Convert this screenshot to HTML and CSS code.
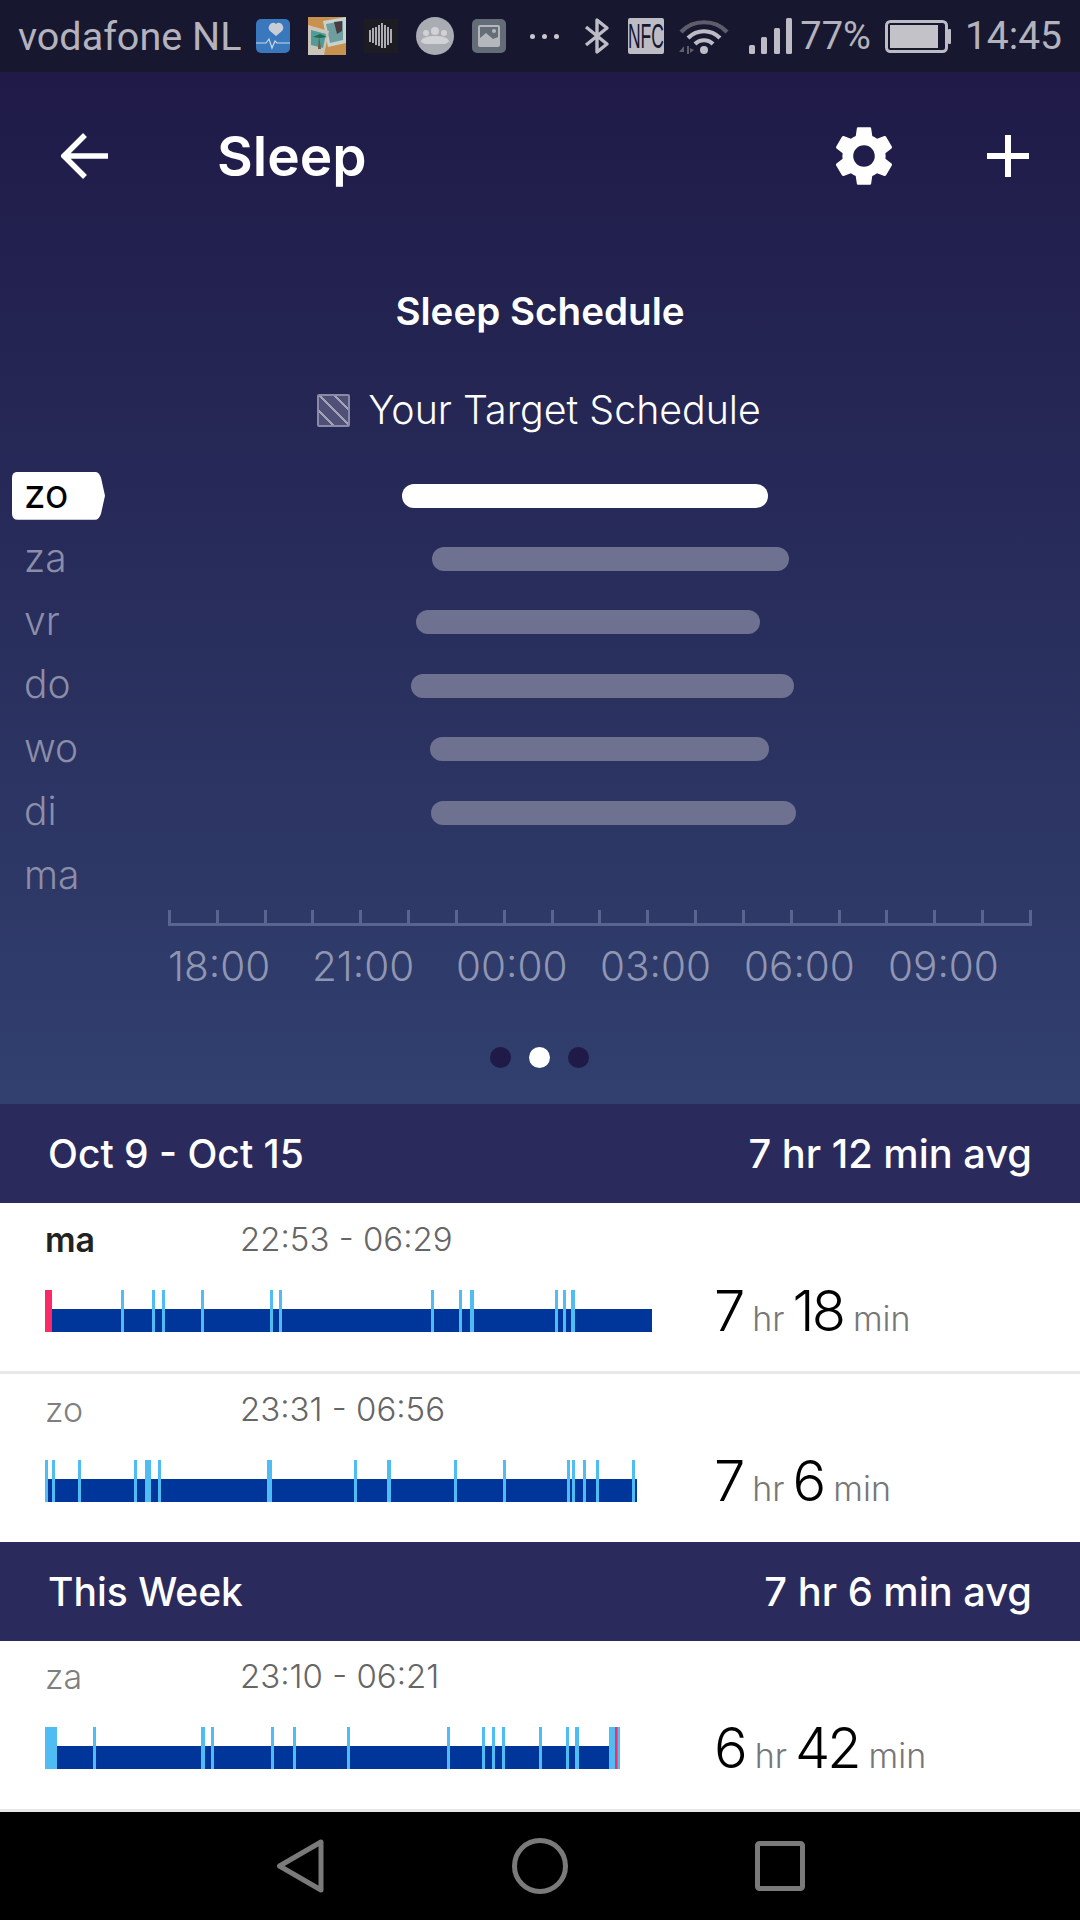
FILE: index.html
```html
<!DOCTYPE html>
<html lang="nl">
<head>
  <meta charset="UTF-8" />
  <meta name="viewport" content="width=device-width, initial-scale=1.0" />
  <title>Sleep</title>
  <link rel="stylesheet" href="styles.css">
</head>
<body>
  <div class="phone">

    <!-- android status bar -->
    <div class="statusbar">
      <span class="carrier">vodafone NL</span>
      <div class="notif-icons">
        <svg class="app-icon" viewBox="0 0 34 34">
          <rect width="34" height="34" rx="5" fill="#3a78bd"/>
          <path d="M23 20l-6 5-6-5c-4-4 2-11 6-7 4-4 10 3 6 7z" transform="translate(3 -8)" fill="#c9ced6"/>
          <path d="M0 24h10l3-4 3 9 3-7 2 2h13" fill="none" stroke="#c9d6e6" stroke-width="1.2"/>
        </svg>
        <svg class="app-icon-big" viewBox="0 0 38 38">
          <rect width="38" height="38" fill="#c9914f"/>
          <path d="M15 4l23-4v26l-18 4z" fill="#c7d3cf"/>
          <path d="M18 7l17-3v19l-13 3z" fill="#6f9ea0"/>
          <path d="M26 5l8-1v10l-5 3z" fill="#4c3a42"/>
          <path d="M0 8l21 6-5 24H0z" fill="#c9c5b9"/>
          <path d="M3 13l15 4-3 14-12-3z" fill="#4f9c9c"/>
          <path d="M11 18l2 14h-3z" fill="#7b5a3a"/>
          <path d="M5 20l7-3 7 3-7 1z" fill="#1f6a4a"/>
        </svg>
        <svg class="app-icon" viewBox="0 0 34 34">
          <rect width="34" height="34" fill="#1c1c22"/>
          <path d="M6 11v12M9 9v15M12 8v18M15 6v21M18 4v25M21 6v23M24 8v18M27 10v14" stroke="#d2d2d6" stroke-width="1.6"/>
        </svg>
        <svg class="app-icon-big" viewBox="0 0 38 38">
          <circle cx="19" cy="19" r="19" fill="#a9acb3"/>
          <circle cx="19" cy="14" r="4" fill="#d0d2d6"/>
          <circle cx="10" cy="16" r="3" fill="#d0d2d6"/>
          <circle cx="28" cy="16" r="3" fill="#d0d2d6"/>
          <path d="M5 25c0-5 8-6 14-6s14 1 14 6l-4 2H9z" fill="#d0d2d6"/>
        </svg>
        <svg class="app-icon" viewBox="0 0 34 34">
          <rect width="34" height="34" rx="5" fill="#646c77"/>
          <rect x="7" y="7" width="20" height="20" rx="1" fill="none" stroke="#b4b7bc" stroke-width="2"/>
          <path d="M8 26v-7l6-5 7 6 5-2v8z" fill="#b4b7bc"/>
          <circle cx="22" cy="12" r="2" fill="#b4b7bc"/>
        </svg>
        <div class="more-dots"><i></i><i></i><i></i></div>
      </div>
      <div class="sys-icons">
        <svg class="ic-bt" viewBox="0 0 27 38">
          <path d="M2 10l21 17-10 8V3l10 8L2 28" fill="none" stroke="#bdbcc4" stroke-width="3.4" stroke-linejoin="round"/>
        </svg>
        <span class="nfc"><span>NFC</span></span>
        <svg class="ic-wifi" viewBox="0 0 50 36">
          <path d="M2 14C14 1 36 1 48 14" fill="none" stroke="#5d5d6c" stroke-width="4.2"/>
          <path d="M9 20C18 11 32 11 41 20" fill="none" stroke="#bdbcc4" stroke-width="4.2"/>
          <path d="M16 26C21 21 29 21 34 26" fill="none" stroke="#bdbcc4" stroke-width="4.2"/>
          <circle cx="25" cy="32" r="4" fill="#bdbcc4"/>
          <path d="M0 34l5-6v6zM8 28h2v8H8zM11 30l4 2-4 3z" fill="#5d5d6c"/>
        </svg>
        <svg class="ic-signal" viewBox="0 0 43 36">
          <rect x="0" y="27" width="6" height="9" rx="1.5" fill="#bdbcc4"/>
          <rect x="12" y="19" width="6" height="17" rx="1.5" fill="#bdbcc4"/>
          <rect x="25" y="10" width="6" height="26" rx="1.5" fill="#bdbcc4"/>
          <rect x="37" y="0" width="6" height="36" rx="1.5" fill="#bdbcc4"/>
        </svg>
        <span class="percent">77%</span>
        <svg class="ic-battery" viewBox="0 0 66 33">
          <rect x="1.5" y="1.5" width="60" height="30" rx="4" fill="none" stroke="#bdbcc4" stroke-width="3"/>
          <rect x="5" y="5" width="48" height="23" fill="#c3c2c9"/>
          <rect x="63" y="9" width="3" height="15" rx="1" fill="#bdbcc4"/>
        </svg>
        <span class="clock">14:45</span>
      </div>
    </div>

    <div class="hero">
      <div class="appbar">
        <svg class="ic-back" viewBox="0 0 48 46">
          <path d="M47 23H4M24 2L3 23l21 21" fill="none" stroke="#fff" stroke-width="5.5"/>
        </svg>
        <h1>Sleep</h1>
        <svg class="ic-gear" viewBox="2.4 2 19.2 20">
          <path fill="#fff" d="M19.14 12.94c.04-.3.06-.61.06-.94 0-.32-.02-.64-.07-.94l2.03-1.58c.18-.14.23-.41.12-.61l-1.92-3.32c-.12-.22-.37-.29-.59-.22l-2.39.96c-.5-.38-1.03-.7-1.62-.94l-.36-2.54c-.04-.24-.24-.41-.48-.41h-3.84c-.24 0-.43.17-.47.41l-.36 2.54c-.59.24-1.13.57-1.62.94l-2.39-.96c-.22-.08-.47 0-.59.22L2.74 8.87c-.12.21-.08.47.12.61l2.03 1.58c-.05.3-.09.63-.09.94s.02.64.07.94l-2.03 1.58c-.18.14-.23.41-.12.61l1.92 3.32c.12.22.37.29.59.22l2.39-.96c.5.38 1.03.7 1.62.94l.36 2.54c.05.24.24.41.48.41h3.84c.24 0 .44-.17.47-.41l.36-2.54c.59-.24 1.13-.56 1.62-.94l2.39.96c.22.08.47 0 .59-.22l1.92-3.32c.12-.22.07-.47-.12-.61l-2.01-1.58zM12 15.6c-1.98 0-3.6-1.62-3.6-3.6s1.62-3.6 3.6-3.6 3.6 1.62 3.6 3.6-1.62 3.6-3.6 3.6z"/>
        </svg>
        <svg class="ic-plus" viewBox="0 0 42 42">
          <path d="M21 0v42M0 21h42" stroke="#fff" stroke-width="6"/>
        </svg>
      </div>

      <h2 class="chart-title">Sleep Schedule</h2>
      <div class="legend"><span class="swatch"></span>Your Target Schedule</div>

      <div class="chart">
        <div class="day-row">
          <span class="day day-active">zo</span>
          <div class="range range-active" style="margin-left:234px;width:366px"></div>
        </div>
        <div class="day-row">
          <span class="day">za</span>
          <div class="range" style="margin-left:264px;width:357px"></div>
        </div>
        <div class="day-row">
          <span class="day">vr</span>
          <div class="range" style="margin-left:248px;width:344px"></div>
        </div>
        <div class="day-row">
          <span class="day">do</span>
          <div class="range" style="margin-left:243px;width:383px"></div>
        </div>
        <div class="day-row">
          <span class="day">wo</span>
          <div class="range" style="margin-left:262px;width:339px"></div>
        </div>
        <div class="day-row">
          <span class="day">di</span>
          <div class="range" style="margin-left:263px;width:365px"></div>
        </div>
        <div class="day-row">
          <span class="day">ma</span>
        </div>
      </div>

      <div class="axis"></div>
      <div class="axis-labels">
        <span>18:00</span>
        <span>21:00</span>
        <span>00:00</span>
        <span>03:00</span>
        <span>06:00</span>
        <span>09:00</span>
      </div>

      <div class="pager">
        <i></i>
        <i class="on"></i>
        <i></i>
      </div>
    </div>

    <div class="section-head">
      <span>Oct 9 - Oct 15</span>
      <span class="avg">7 hr 12 min avg</span>
    </div>

    <div class="log-row log-row-first">
      <div class="log-top">
        <span class="log-day log-today">ma</span>
        <span class="log-time">22:53 - 06:29</span>
      </div>
      <div class="log-bottom">
        <svg class="stages" width="669" height="42">
          <rect class="deep" x="0" y="19" width="607" height="23"/>
          <rect class="pink" x="0" y="0" width="7" height="42"/>
          <rect class="wake" x="76" y="0" width="3" height="42"/>
          <rect class="wake" x="107" y="0" width="3" height="42"/>
          <rect class="wake" x="117" y="0" width="3" height="42"/>
          <rect class="wake" x="156" y="0" width="3" height="42"/>
          <rect class="wake" x="225" y="0" width="3" height="42"/>
          <rect class="wake" x="234" y="0" width="3" height="42"/>
          <rect class="wake" x="386" y="0" width="3" height="42"/>
          <rect class="wake" x="414" y="0" width="3" height="42"/>
          <rect class="wake" x="425" y="0" width="4" height="42"/>
          <rect class="wake" x="510" y="0" width="3" height="42"/>
          <rect class="wake" x="518" y="0" width="3" height="42"/>
          <rect class="wake" x="526" y="0" width="4" height="42"/>
        </svg>
        <div class="duration"><b>7</b><span>hr</span><b>18</b><span>min</span></div>
      </div>
    </div>

    <div class="log-row">
      <div class="log-top">
        <span class="log-day">zo</span>
        <span class="log-time">23:31 - 06:56</span>
      </div>
      <div class="log-bottom">
        <svg class="stages" width="669" height="42">
          <rect class="deep" x="0" y="19" width="592" height="23"/>
          <rect class="wake" x="0" y="0" width="3" height="42"/>
          <rect class="wake" x="7" y="0" width="3" height="42"/>
          <rect class="wake" x="33" y="0" width="3" height="42"/>
          <rect class="wake" x="89" y="0" width="3" height="42"/>
          <rect class="wake" x="100" y="0" width="6" height="42"/>
          <rect class="wake" x="113" y="0" width="3" height="42"/>
          <rect class="wake" x="222" y="0" width="5" height="42"/>
          <rect class="wake" x="309" y="0" width="3" height="42"/>
          <rect class="wake" x="342" y="0" width="4" height="42"/>
          <rect class="wake" x="409" y="0" width="3" height="42"/>
          <rect class="wake" x="458" y="0" width="3" height="42"/>
          <rect class="wake" x="522" y="0" width="3" height="42"/>
          <rect class="wake" x="527" y="0" width="3" height="42"/>
          <rect class="wake" x="538" y="0" width="3" height="42"/>
          <rect class="wake" x="551" y="0" width="3" height="42"/>
          <rect class="wake" x="587" y="0" width="3" height="42"/>
        </svg>
        <div class="duration"><b>7</b><span>hr</span><b>6</b><span>min</span></div>
      </div>
    </div>

    <div class="section-head">
      <span>This Week</span>
      <span class="avg">7 hr 6 min avg</span>
    </div>

    <div class="log-row">
      <div class="log-top">
        <span class="log-day">za</span>
        <span class="log-time">23:10 - 06:21</span>
      </div>
      <div class="log-bottom">
        <svg class="stages" width="669" height="42">
          <rect class="deep" x="0" y="19" width="564" height="23"/>
          <rect class="wake" x="0" y="0" width="12" height="42"/>
          <rect class="wake" x="48" y="0" width="3" height="42"/>
          <rect class="wake" x="156" y="0" width="4" height="42"/>
          <rect class="wake" x="166" y="0" width="3" height="42"/>
          <rect class="wake" x="226" y="0" width="3" height="42"/>
          <rect class="wake" x="248" y="0" width="3" height="42"/>
          <rect class="wake" x="302" y="0" width="3" height="42"/>
          <rect class="wake" x="402" y="0" width="3" height="42"/>
          <rect class="wake" x="437" y="0" width="3" height="42"/>
          <rect class="wake" x="447" y="0" width="3" height="42"/>
          <rect class="wake" x="457" y="0" width="3" height="42"/>
          <rect class="wake" x="494" y="0" width="3" height="42"/>
          <rect class="wake" x="521" y="0" width="3" height="42"/>
          <rect class="wake" x="530" y="0" width="4" height="42"/>
          <rect class="wake" x="564" y="0" width="11" height="42"/>
          <rect class="pink" x="570" y="0" width="2.5" height="42"/>
        </svg>
        <div class="duration"><b>6</b><span>hr</span><b>42</b><span>min</span></div>
      </div>
    </div>

    <!-- android nav bar -->
    <div class="navbar">
      <svg class="ic-nav-back" viewBox="0 0 48 54">
        <path d="M3.5 27L45 3v48z" fill="none" stroke="#7a7a7a" stroke-width="5" stroke-linejoin="round"/>
      </svg>
      <svg class="ic-nav-home" viewBox="0 0 56 56">
        <circle cx="28" cy="28" r="25.5" fill="none" stroke="#7a7a7a" stroke-width="5"/>
      </svg>
      <svg class="ic-nav-recent" viewBox="0 0 50 50">
        <rect x="2.5" y="2.5" width="45" height="45" rx="2" fill="none" stroke="#7a7a7a" stroke-width="5"/>
      </svg>
    </div>
  </div>
</body>
</html>
```

FILE: styles.css
```css
* {
  box-sizing: border-box;
}

html, body {
  margin: 0;
  padding: 0;
}

body {
  font-family: 'Inter', 'Lato', sans-serif;
  background: #fff;
  overflow: hidden;
}

.phone {
  width: 1080px;
  height: 1920px;
  display: flex;
  flex-direction: column;
  overflow: hidden;
}

/* status bar */
.statusbar {
  height: 72px;
  flex: none;
  background: #171830;
  color: #b4b3bd;
  font-family: 'Roboto', sans-serif;
  display: flex;
  align-items: center;
  padding: 0 18px 0 18px;
}

.carrier {
  font-size: 39.5px;
  width: 238px;
  white-space: nowrap;
}

.notif-icons {
  display: flex;
  align-items: center;
  gap: 18px;
}

.app-icon {
  width: 34px;
  height: 34px;
}

.app-icon-big {
  width: 38px;
  height: 38px;
}

.more-dots {
  display: flex;
  gap: 7px;
  margin-left: 6px;
}

.more-dots i {
  width: 5px;
  height: 5px;
  border-radius: 50%;
  background: #c8c8d0;
}

.sys-icons {
  display: flex;
  align-items: center;
  margin-left: auto;
}

.ic-bt {
  width: 27px;
  height: 38px;
}

.nfc {
  display: flex;
  justify-content: center;
  width: 36px;
  height: 36px;
  margin-left: 17px;
  background: #bdbcc4;
  color: #171830;
  font-family: 'Liberation Sans', sans-serif;
  font-size: 35px;
  line-height: 36px;
  border-radius: 2px;
}

.nfc span {
  transform: scaleX(0.5);
}

.ic-wifi {
  width: 50px;
  height: 36px;
  margin-left: 15px;
}

.ic-signal {
  width: 43px;
  height: 36px;
  margin-left: 20px;
}

.percent {
  font-size: 38px;
  margin-left: 8px;
}

.ic-battery {
  width: 66px;
  height: 33px;
  margin-left: 14px;
}

.clock {
  font-size: 39px;
  margin-left: 14px;
}

/* top chart part */
.hero {
  height: 1032px;
  flex: none;
  background: linear-gradient(to bottom, #1f1a47, #31406f);
  color: #fff;
}

.appbar {
  height: 168px;
  display: flex;
  align-items: center;
  padding: 0 51px 0 61px;
}

.appbar h1 {
  font-size: 55px;
  font-weight: 600;
  margin: 0 0 0 108px;
}

.ic-back {
  width: 48px;
  height: 46px;
}

.ic-gear {
  width: 58px;
  height: 60px;
  margin-left: auto;
}

.ic-plus {
  width: 42px;
  height: 42px;
  margin-left: 94px;
}

.chart-title {
  font-size: 38.6px;
  font-weight: 600;
  line-height: 48px;
  text-align: center;
  margin: 47px 0 0;
}

.legend {
  display: flex;
  justify-content: center;
  align-items: center;
  gap: 18px;
  font-size: 39.3px;
  font-weight: 300;
  line-height: 48px;
  margin-top: 51px;
  margin-left: -2px;
}

.swatch {
  width: 33px;
  height: 33px;
  border: 2px solid #8a8aa6;
  border-radius: 2px;
  background: repeating-linear-gradient(45deg, #4f4f78 0 9px, #a3a3b8 9px 11px);
}

.chart {
  margin-top: 30px;
}

.day-row {
  height: 63.4px;
  display: grid;
  grid-template-columns: 168px 1fr;
  align-items: center;
}

.day {
  font-size: 39px;
  font-weight: 300;
  line-height: 48px;
  padding-bottom: 3px;
  color: #8b8da9;
  padding-left: 24px;
}

.day-active {
  width: 93px;
  height: 48px;
  line-height: 44px;
  padding-bottom: 0;
  margin-left: 12px;
  padding-left: 12px;
  background: #fff;
  color: #000;
  font-weight: 400;
  clip-path: path("M6 0H83Q87 0 89 6L93 24L89 42Q87 48 83 48H6Q0 48 0 42V6Q0 0 6 0Z");
}

.range {
  height: 24px;
  border-radius: 12px;
  background: #6e7190;
}

.range-active {
  background: #fff;
}

.axis {
  width: 864px;
  height: 16px;
  margin: 2px 0 0 168px;
  border-bottom: 3px solid #5a648f;
  background: repeating-linear-gradient(90deg, #5a648f 0 3px, transparent 3px 47.83px);
}

.axis-labels {
  display: grid;
  grid-template-columns: repeat(6, 144px);
  margin: 17px 0 0 168px;
  font-size: 40.5px;
  font-weight: 300;
  line-height: 48px;
  color: #8f96b3;
}

.pager {
  display: flex;
  justify-content: center;
  gap: 18px;
  margin-top: 56px;
  padding-right: 2px;
}

.pager i {
  width: 21px;
  height: 21px;
  border-radius: 50%;
  background: #1f1a47;
}

.pager .on {
  background: #fff;
}

/* list */
.section-head {
  height: 99px;
  flex: none;
  background: #2b2a5c;
  color: #fff;
  font-size: 39px;
  font-weight: 500;
  display: flex;
  justify-content: space-between;
  align-items: center;
  padding: 0 48px 0 48px;
}

.section-head .avg {
  font-size: 39.8px;
}

.log-row {
  height: 171px;
  flex: none;
  padding: 12px 0 0 45px;
  background: #fff;
  border-bottom: 3px solid #e8e8e8;
}

.log-row-first {
  padding-top: 13px;
}

.log-row:nth-of-type(n) + .section-head {
  margin-top: -3px;
}

.log-top {
  display: flex;
  align-items: center;
  height: 46px;
}

.log-day {
  width: 195px;
  font-size: 34px;
  font-weight: 300;
  color: #7f7f7f;
}

.log-today {
  font-weight: 600;
  color: #222;
}

.log-time {
  font-size: 33px;
  font-weight: 300;
  color: #666;
}

.log-bottom {
  display: flex;
  align-items: flex-end;
  height: 42px;
  margin-top: 28px;
}

.stages {
  flex: none;
}

.deep { fill: #00359a; }
.wake { fill: #4fbcf3; }
.pink { fill: #fb2a67; }

.duration {
  display: flex;
  align-items: baseline;
  line-height: 60px;
  margin-bottom: -17px;
  white-space: nowrap;
}

.duration b {
  font-size: 56px;
  font-weight: 300;
  letter-spacing: -3px;
  color: #000;
}

.duration span {
  font-size: 34px;
  font-weight: 300;
  color: #777;
  margin: 0 8px 0 10px;
}

/* bottom nav */
.navbar {
  flex: 1;
  background: #000;
  display: flex;
  align-items: center;
  padding-left: 276px;
}

.ic-nav-back {
  width: 48px;
  height: 54px;
}

.ic-nav-home {
  width: 56px;
  height: 56px;
  margin-left: 188px;
}

.ic-nav-recent {
  width: 50px;
  height: 50px;
  margin-left: 187px;
}
```
